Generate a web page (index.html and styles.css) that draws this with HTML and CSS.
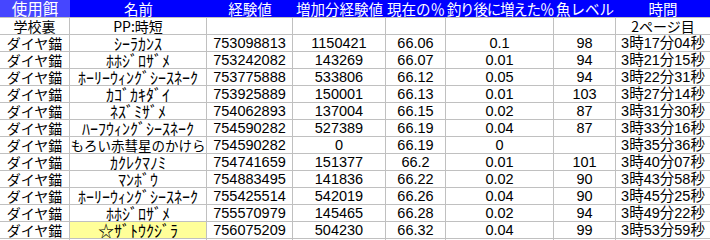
FILE: index.html
```html
<!DOCTYPE html>
<html lang="ja">
<head>
<meta charset="utf-8">
<title>釣り記録</title>
<link rel="stylesheet" href="styles.css">
</head>
<body>
<div class="sheet">
  <div class="h sel">使用餌</div><div class="h">名前</div><div class="h">経験値</div><div class="h">増加分経験値</div><div class="h">現在の％</div><div class="h tight">釣り後に増えた％</div><div class="h">魚レベル</div><div class="h">時間</div>

  <div class="c">学校裏</div><div class="c">PP:時短</div><div class="c"></div><div class="c"></div><div class="c"></div><div class="c"></div><div class="c"></div><div class="c last">2ページ目</div>

  <div class="c">ダイヤ錨</div><div class="c k">ｼｰﾗｶﾝｽ</div><div class="c n">753098813</div><div class="c n">1150421</div><div class="c n">66.06</div><div class="c n">0.1</div><div class="c n">98</div><div class="c n last">3時17分04秒</div>
  <div class="c">ダイヤ錨</div><div class="c k">ﾎﾎｼﾞﾛｻﾞﾒ</div><div class="c n">753242082</div><div class="c n">143269</div><div class="c n">66.07</div><div class="c n">0.01</div><div class="c n">94</div><div class="c n last">3時21分15秒</div>
  <div class="c">ダイヤ錨</div><div class="c k">ﾎｰﾘｰｳｨﾝｸﾞｼｰｽﾈｰｸ</div><div class="c n">753775888</div><div class="c n">533806</div><div class="c n">66.12</div><div class="c n">0.05</div><div class="c n">94</div><div class="c n last">3時22分31秒</div>
  <div class="c">ダイヤ錨</div><div class="c k">ｶｺﾞｶｷﾀﾞｲ</div><div class="c n">753925889</div><div class="c n">150001</div><div class="c n">66.13</div><div class="c n">0.01</div><div class="c n">103</div><div class="c n last">3時27分14秒</div>
  <div class="c">ダイヤ錨</div><div class="c k">ﾈｽﾞﾐｻﾞﾒ</div><div class="c n">754062893</div><div class="c n">137004</div><div class="c n">66.15</div><div class="c n">0.02</div><div class="c n">87</div><div class="c n last">3時31分30秒</div>
  <div class="c">ダイヤ錨</div><div class="c k">ﾊｰﾌｳｨﾝｸﾞｼｰｽﾈｰｸ</div><div class="c n">754590282</div><div class="c n">527389</div><div class="c n">66.19</div><div class="c n">0.04</div><div class="c n">87</div><div class="c n last">3時33分16秒</div>
  <div class="c">ダイヤ錨</div><div class="c w">もろい赤彗星のかけら</div><div class="c n">754590282</div><div class="c n">0</div><div class="c n">66.19</div><div class="c n">0</div><div class="c n"></div><div class="c n last">3時35分36秒</div>
  <div class="c">ダイヤ錨</div><div class="c k">ｶｸﾚｸﾏﾉﾐ</div><div class="c n">754741659</div><div class="c n">151377</div><div class="c n">66.2</div><div class="c n">0.01</div><div class="c n">101</div><div class="c n last">3時40分07秒</div>
  <div class="c">ダイヤ錨</div><div class="c k">ﾏﾝﾎﾞｳ</div><div class="c n">754883495</div><div class="c n">141836</div><div class="c n">66.22</div><div class="c n">0.02</div><div class="c n">90</div><div class="c n last">3時43分58秒</div>
  <div class="c">ダイヤ錨</div><div class="c k">ﾎｰﾘｰｳｨﾝｸﾞｼｰｽﾈｰｸ</div><div class="c n">755425514</div><div class="c n">542019</div><div class="c n">66.26</div><div class="c n">0.04</div><div class="c n">90</div><div class="c n last">3時45分25秒</div>
  <div class="c">ダイヤ錨</div><div class="c k">ﾎﾎｼﾞﾛｻﾞﾒ</div><div class="c n">755570979</div><div class="c n">145465</div><div class="c n">66.28</div><div class="c n">0.02</div><div class="c n">94</div><div class="c n last">3時49分22秒</div>
  <div class="c">ダイヤ錨</div><div class="c k hl">☆ｻﾞﾄｳｸｼﾞﾗ</div><div class="c n">756075209</div><div class="c n">504230</div><div class="c n">66.32</div><div class="c n">0.04</div><div class="c n">99</div><div class="c n last">3時53分59秒</div>

  <div class="c"></div><div class="c"></div><div class="c"></div><div class="c"></div><div class="c"></div><div class="c"></div><div class="c"></div><div class="c last"></div>
</div>
</body>
</html>
```

FILE: styles.css
```css
html, body {
  margin: 0;
  padding: 0;
  background: #ffffff;
}

.sheet {
  display: grid;
  grid-template-columns: 70px 137px 86px 93px 60px 108px 62px 94px;
  grid-auto-rows: 17px;
  width: 710px;
  font-family: "Noto Sans CJK JP", sans-serif;
  font-size: 14px;
  color: #000;
}

.h {
  background: #0000ff;
  color: #ffffff;
  font-size: 14.5px;
  line-height: 17px;
  text-align: center;
  white-space: nowrap;
}

.h.sel {
  background: #4646ff;
  font-size: 15.5px;
}

.h.tight {
  letter-spacing: -1.2px;
}

.c {
  box-sizing: border-box;
  border-top: 1px solid #c0c0c0;
  border-right: 1px solid #c0c0c0;
  line-height: 16px;
  text-align: center;
  white-space: nowrap;
}

.c.last {
  border-right: none;
}

.n {
  font-family: "Liberation Sans", "Noto Sans CJK JP", sans-serif;
  font-size: 14.5px;
}

.k {
  font-size: 16px;
}

.w {
  font-size: 13.5px;
}

.hl {
  background: #ffff99;
}
```
